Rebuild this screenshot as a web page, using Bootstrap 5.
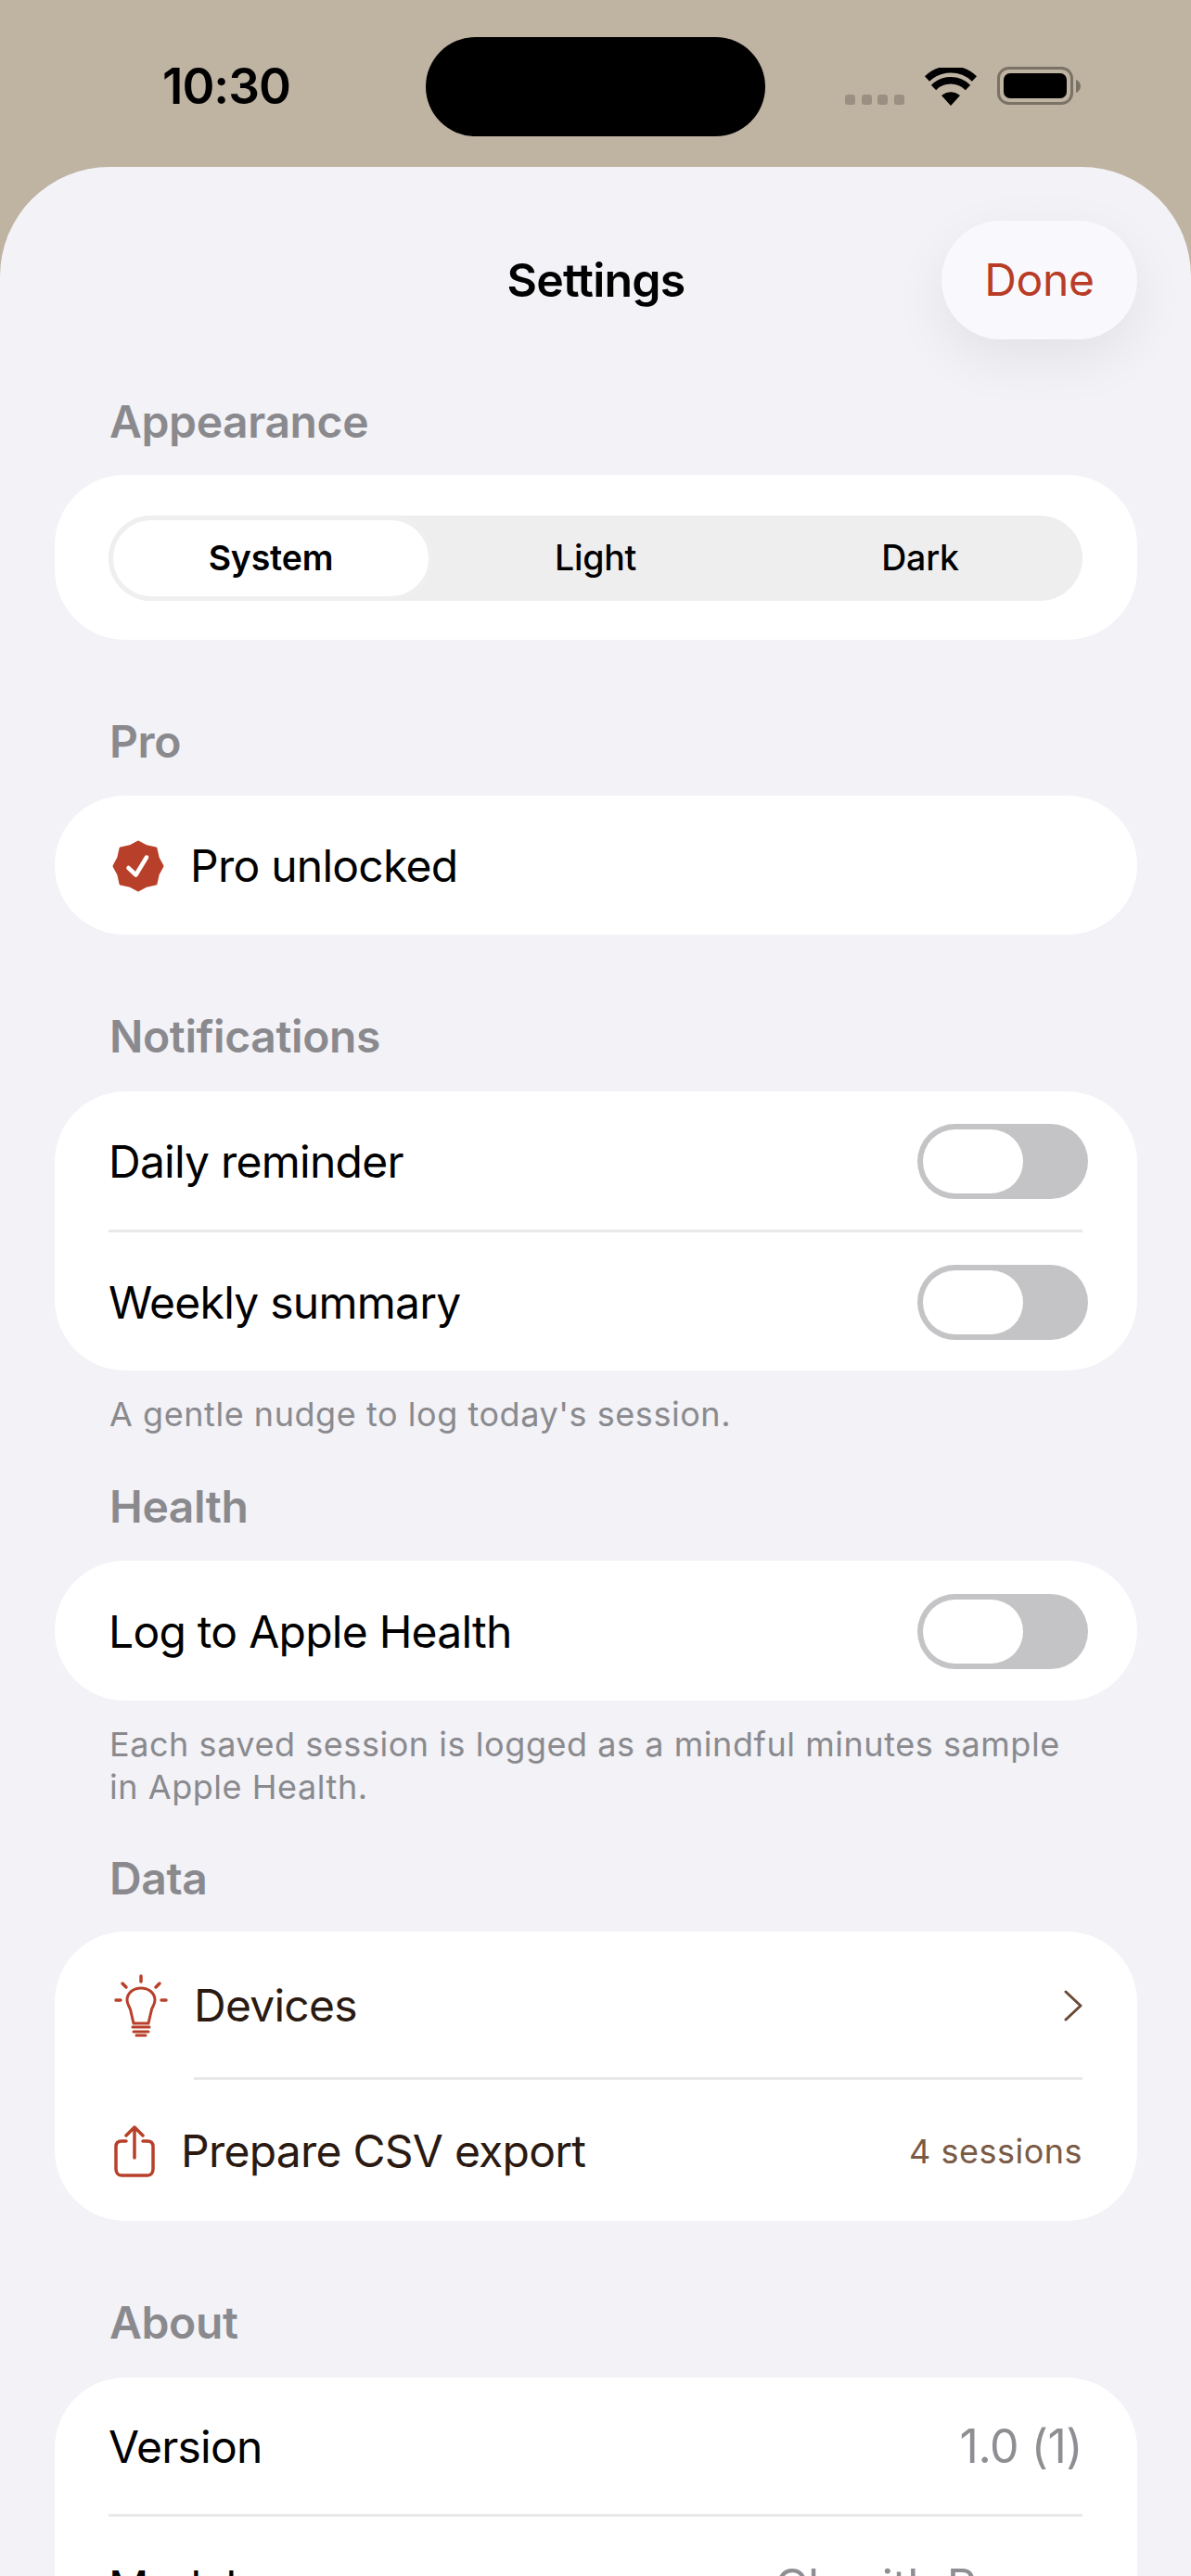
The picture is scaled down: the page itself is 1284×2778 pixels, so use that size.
<!DOCTYPE html>
<html lang="en">
<head>
    <meta charset="UTF-8">
    <meta name="viewport" content="width=device-width, initial-scale=1.0">
    <title>Settings</title>
    <link href="https://cdn.jsdelivr.net/npm/bootstrap@5.3.2/dist/css/bootstrap.min.css" rel="stylesheet">
    <style>
        html, body { height: 100%; }
        body { background: #bfb3a2; font-family: Inter, "Liberation Sans", sans-serif; color: #000; overflow: hidden; }
        .status-bar { height: 180px; padding: 40px 59px 0 175px; }
        .clock { width: 284px; height: 107px; font-size: 53px; font-weight: 600; letter-spacing: -1px; line-height: 107px; }
        .island { width: 366px; height: 107px; border-radius: 54px; background: #000; }
        .status-icons { flex: 1; height: 107px; padding-left: 86px; }
        .sig-dots { gap: 6.67px; margin-top: 62px; }
        .sig-dots span { width: 11px; height: 11px; border-radius: 3px; background: #9a8f81; }
        .wifi-icon { margin-left: 22px; margin-top: 33px; }
        .batt-icon { margin-left: 22px; margin-top: 32px; }
        .sheet { background: #f2f2f7; border-radius: 118px 118px 0 0; height: 2598px; padding: 58px 58px 0 59px; overflow: hidden; }
        .sheet-head { height: 128px; position: relative; }
        .sheet-title { font-size: 50px; font-weight: 600; letter-spacing: -0.8px; }
        .done-btn { position: absolute; right: 0; top: 0; width: 211px; height: 128px; border-radius: 64px; background: #f9f9fd; border: 0; color: #b83c27; font-size: 48px; letter-spacing: -0.3px; padding: 0; box-shadow: 0 20px 60px rgba(0,0,0,.07); }
        .sec-head { font-size: 48px; font-weight: 600; color: #8a8a8e; padding-left: 59px; letter-spacing: -0.4px; line-height: 60px; height: 60px; }
        .set-card { background: #fff; border-radius: 76px; border: 0; }
        .seg-wrap { height: 178px; padding: 44px 59px 0 58px; }
        .seg-track { height: 92px; border-radius: 46px; background: #eeeeee; display: grid; grid-template-columns: repeat(3, 1fr); }
        .seg-item { font-size: 37.5px; font-weight: 500; text-align: center; line-height: 92px; letter-spacing: -0.2px; }
        .seg-item.picked { background: #fff; border: 5px solid #efefef; border-radius: 46px; line-height: 82px; font-weight: 600; }
        .set-row { padding: 2px 59px 0 58px; font-size: 48px; letter-spacing: -0.75px; }
        .row-sep { height: 3px; background: #e9e9ea; margin: 0 59px 0 58px; }
        .sw-track { width: 184px; height: 81px; border-radius: 41px; background: #c4c4c6; padding: 6px; margin-right: -6px; }
        .sw-knob { width: 108px; height: 69px; border-radius: 35px; background: #fff; }
        .foot-note { font-size: 36px; line-height: 46px; color: #8a8a8e; padding-left: 59px; padding-right: 60px; letter-spacing: 0.55px; }
        .brown-txt { color: #2b1a12; }
        .brown-val { color: #7a5a45; font-size: 36px; letter-spacing: 0.5px; }
        .grey-val { color: #8e8e93; font-size: 50px; letter-spacing: -0.5px; }
        .sec-appearance { margin-top: 59px; margin-bottom: 27px; }
        .sec-pro { margin-top: 80px; margin-bottom: 28px; }
        .row-pro { height: 150px; }
        .pro-badge { margin-left: 4px; margin-right: 28px; }
        .sec-notif { margin-top: 80px; margin-bottom: 29px; }
        .row-tall { height: 149px; }
        .note-one { margin-top: 24px; }
        .sec-health { margin-top: 47px; margin-bottom: 28px; }
        .row-health { height: 151px; }
        .note-two { margin-top: 24px; }
        .sec-data { margin-top: 46px; margin-bottom: 27px; }
        .row-devices { height: 157px; }
        .bulb-icon { margin-left: 6px; margin-right: 28px; }
        .sep-indent { margin-left: 150px; }
        .row-export { height: 152px; }
        .share-icon { margin-left: 6px; margin-right: 28px; }
        .sec-about { margin-top: 80px; margin-bottom: 29px; }
        .row-version { height: 147px; }
        .row-model { height: 149px; }
    </style>
</head>
<body>

    <div class="status-bar d-flex">
        <div class="clock">10:30</div>
        <div class="island"></div>
        <div class="status-icons d-flex align-items-start">
            <div class="sig-dots d-flex">
                <span></span><span></span><span></span><span></span>
            </div>
            <svg class="wifi-icon" width="56" height="41" viewBox="0 0 56 41">
                <path d="M28 41 L18 30 A15 15 0 0 1 38 30 Z" fill="#000"/>
                <path d="M9.500 21.500 A26 26 0 0 1 46.500 21.500" fill="none" stroke="#000" stroke-width="7.500"/>
                <path d="M2.500 12 A37 37 0 0 1 53.500 12" fill="none" stroke="#000" stroke-width="7.500"/>
            </svg>
            <svg class="batt-icon" width="90" height="41" viewBox="0 0 90 41">
                <rect x="1.500" y="1.500" width="79" height="38" rx="11" fill="none" stroke="#7b7266" stroke-width="3"/>
                <rect x="7" y="7" width="68" height="27" rx="7" fill="#000"/>
                <path d="M85 14 C88 15 90 18 90 21 C90 24 88 27 85 28 Z" fill="#7b7266"/>
            </svg>
        </div>
    </div>

    <div class="sheet">
        <div class="sheet-head d-flex align-items-center justify-content-center">
            <div class="sheet-title">Settings</div>
            <button class="done-btn" type="button">Done</button>
        </div>

        <div class="sec-head sec-appearance">Appearance</div>
        <div class="set-card seg-wrap">
            <div class="seg-track">
                <div class="seg-item picked">System</div>
                <div class="seg-item">Light</div>
                <div class="seg-item">Dark</div>
            </div>
        </div>

        <div class="sec-head sec-pro">Pro</div>
        <div class="set-card set-row d-flex align-items-center row-pro">
            <svg class="pro-badge" width="56" height="56" viewBox="0 0 56 56">
                <path fill="#b8402a" stroke="#b8402a" stroke-width="3" stroke-linejoin="round" d="M28 2 L36.800 6.750 L47 9 L49.250 19.200 L54 28 L49.250 36.800 L47 47 L36.800 49.250 L28 54 L19.200 49.250 L9 47 L6.750 36.800 L2 28 L6.750 19.200 L9 9 L19.200 6.750 Z"/>
                <path d="M17.500 30 L25.500 37.500 L37 18.500" fill="none" stroke="#fff" stroke-width="4.500" stroke-linecap="round" stroke-linejoin="round"/>
            </svg>
            <span>Pro unlocked</span>
        </div>

        <div class="sec-head sec-notif">Notifications</div>
        <div class="set-card">
            <div class="set-row row-tall d-flex align-items-center justify-content-between">
                <span>Daily reminder</span>
                <div class="sw-track"><div class="sw-knob"></div></div>
            </div>
            <div class="row-sep"></div>
            <div class="set-row row-tall d-flex align-items-center justify-content-between">
                <span>Weekly summary</span>
                <div class="sw-track"><div class="sw-knob"></div></div>
            </div>
        </div>
        <div class="foot-note note-one">A gentle nudge to log today's session.</div>

        <div class="sec-head sec-health">Health</div>
        <div class="set-card set-row row-health d-flex align-items-center justify-content-between">
            <span>Log to Apple Health</span>
            <div class="sw-track"><div class="sw-knob"></div></div>
        </div>
        <div class="foot-note note-two">Each saved session is logged as a mindful minutes sample in Apple Health.</div>

        <div class="sec-head sec-data">Data</div>
        <div class="set-card">
            <div class="set-row row-devices d-flex align-items-center brown-txt">
                <svg class="bulb-icon" width="58" height="68" viewBox="0 0 58 68" fill="none" stroke="#b8402a" stroke-linecap="round">
                    <path stroke-width="3.500" d="M29 2 V8 M9 10 L13 14 M49 10 L45 14 M2 28 H7 M51 28 H56"/>
                    <path stroke-width="3" d="M21 53 L17.500 38 C16 34 14 32 14 28 C14 20 21 15 29 15 C37 15 44 20 44 28 C44 32 42 34 40.500 38 L37 53 Z"/>
                    <path stroke-width="3" d="M20 57 H38 M21 62 H37 M24 66 H34"/>
                </svg>
                <span class="flex-grow-1">Devices</span>
                <svg width="20" height="34" viewBox="0 0 20 34" fill="none" stroke="#6b4a35" stroke-width="3" stroke-linecap="round" stroke-linejoin="round">
                    <path d="M2 2 L18 17 L2 32"/>
                </svg>
            </div>
            <div class="row-sep sep-indent"></div>
            <div class="set-row row-export d-flex align-items-center justify-content-between brown-txt">
                <div class="d-flex align-items-center">
                    <svg class="share-icon" width="44" height="56" viewBox="0 0 44 56" fill="none" stroke="#b8402a" stroke-width="3.500" stroke-linecap="round" stroke-linejoin="round">
                        <path d="M13 17 H8 C4 17 2 19 2 23 V47 C2 51 4 54 8 54 H36 C40 54 42 51 42 47 V23 C42 19 40 17 36 17 H31"/>
                        <path d="M22 35 V2 M13 11 L22 2 L31 11"/>
                    </svg>
                    <span>Prepare CSV export</span>
                </div>
                <span class="brown-val">4 sessions</span>
            </div>
        </div>

        <div class="sec-head sec-about">About</div>
        <div class="set-card">
            <div class="set-row row-version d-flex align-items-center justify-content-between">
                <span>Version</span>
                <span class="grey-val">1.0 (1)</span>
            </div>
            <div class="row-sep"></div>
            <div class="set-row row-model d-flex align-items-center justify-content-between">
                <span>Model</span>
                <span class="grey-val">Clawith Power</span>
            </div>
        </div>
    </div>

</body>
</html>
